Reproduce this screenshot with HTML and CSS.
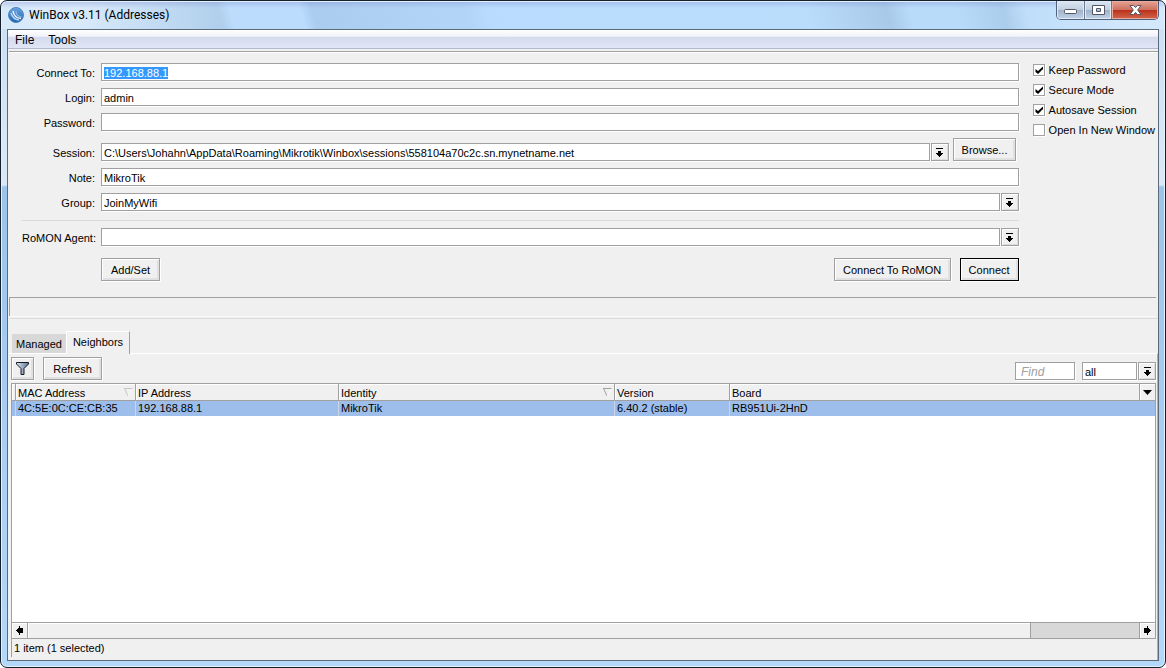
FILE: index.html
```html
<!DOCTYPE html>
<html lang="en">
<head>
<meta charset="utf-8">
<title>WinBox v3.11 (Addresses)</title>
<link rel="stylesheet" href="styles.css">
</head>
<body>
<svg class="defs" aria-hidden="true">
  <symbol id="drop" viewBox="0 0 9 9"><path d="M1 0h7v1H1zM3 3h3v2h2v1H7v1H6v1H5v1H4V8H3V7H2V6H1V5h2z"/></symbol>
  <symbol id="sort" viewBox="0 0 9 9"><path d="M0 .5h8.500M.5 .5l3.500 7.500" fill="none" stroke="#a0a0a0"/><path d="M8 1L4.500 8" fill="none" stroke="#fff"/></symbol>
</svg>
<div class="window">
  <header class="titlebar">
    <svg class="logo" width="16" height="16" viewBox="0 0 16 16">
      <defs><linearGradient id="lg" x2="0" y2="1"><stop stop-color="#6ba6de"/><stop offset="1" stop-color="#1f60ae"/></linearGradient></defs>
      <circle cx="8" cy="8" r="7.500" fill="url(#lg)" stroke="#4a86c4"/>
      <path d="M3 6c1 3.500 3.500 6.500 8 7" fill="none" stroke="#b8d6f2" stroke-width="1.500"/>
      <path d="M5 4c.5 4 3 7 8 7.500" fill="none" stroke="#eef6fe" stroke-width="1.500"/>
      <path d="M8 4c0 3 2 5.500 5.500 5.800" fill="none" stroke="#8dbbe8" stroke-width="1.200"/>
    </svg>
    <h1 class="title">WinBox v3.11 (Addresses)</h1>
    <div class="controls">
      <button class="ctl ctl-min" aria-label="Minimize"><svg width="13" height="12" viewBox="0 0 13 12"><rect x=".5" y="5.500" width="12" height="4" rx="1" fill="#fff" stroke="#535666"/></svg></button>
      <button class="ctl ctl-max" aria-label="Maximize"><svg width="13" height="12" viewBox="0 0 13 12"><path d="M.5 1.500h12v9H.5zM4.500 4.500h4v3h-4z" fill="#fff" fill-rule="evenodd" stroke="#535666"/></svg></button>
      <button class="ctl ctl-close" aria-label="Close"><svg width="13" height="12" viewBox="0 0 13 12"><path d="M1 1.500h3.500l2 2 2-2H12L8.700 6l3.300 4.500H8.500l-2-2-2 2H1L4.300 6z" fill="#fff" stroke="#535666"/></svg></button>
    </div>
  </header>
  <main class="client">
    <nav class="menu"><button>File</button><button>Tools</button></nav>
    <form class="login">
      <div class="fields">
        <div class="row"><label for="host">Connect To:</label><input id="host" type="text" value="192.168.88.1"></div>
        <div class="row"><label for="user">Login:</label><input id="user" type="text" value="admin"></div>
        <div class="row"><label for="pass">Password:</label><input id="pass" type="password"></div>
        <div class="row session"><label for="session">Session:</label><input id="session" type="text" value="C:\Users\Johahn\AppData\Roaming\Mikrotik\Winbox\sessions\558104a70c2c.sn.mynetname.net"><button type="button" class="drop" aria-label="Choose session"><svg><use href="#drop"/></svg></button><button type="button" class="btn browse">Browse...</button></div>
        <div class="row"><label for="note">Note:</label><input id="note" type="text" value="MikroTik"></div>
        <div class="row"><label for="group">Group:</label><input id="group" type="text" value="JoinMyWifi"><button type="button" class="drop" aria-label="Choose group"><svg><use href="#drop"/></svg></button></div>
        <hr>
        <div class="row"><label for="agent">RoMON Agent:</label><input id="agent" type="text"><button type="button" class="drop" aria-label="Choose agent"><svg><use href="#drop"/></svg></button></div>
        <div class="actions"><button type="button" class="btn">Add/Set</button><button type="button" class="btn romon">Connect To RoMON</button><button type="button" class="btn primary">Connect</button></div>
      </div>
      <div class="options">
        <label><input type="checkbox" checked>Keep Password</label>
        <label><input type="checkbox" checked>Secure Mode</label>
        <label><input type="checkbox" checked>Autosave Session</label>
        <label><input type="checkbox">Open In New Window</label>
      </div>
    </form>
    <div class="message"></div>
    <section class="lists">
      <div class="tabs" role="tablist"><button class="tab" role="tab">Managed</button><button class="tab active" role="tab" aria-selected="true">Neighbors</button></div>
      <div class="page">
        <div class="toolbar">
          <button class="btn filter" aria-label="Filter"><svg width="13" height="13" viewBox="0 0 13 13"><defs><linearGradient id="fg"><stop stop-color="#dfe8f5"/><stop offset="1" stop-color="#5d7294"/></linearGradient></defs><path d="M.5 .5h12v1.500L8 6.500v6H5v-6L.5 2z" fill="url(#fg)" stroke="#151a25"/></svg></button>
          <button class="btn refresh">Refresh</button>
          <input class="find" type="text" placeholder="Find" aria-label="Find">
          <div class="scope"><input type="text" value="all" aria-label="Column"><button class="drop" aria-label="Choose column"><svg><use href="#drop"/></svg></button></div>
        </div>
        <div class="grid">
          <table>
            <colgroup><col class="c-flag"><col class="c-mac"><col class="c-ip"><col class="c-id"><col class="c-ver"><col><col class="c-menu"></colgroup>
            <thead><tr><th></th><th><span class="head">MAC Address<svg class="sort faint"><use href="#sort"/></svg></span></th><th>IP Address</th><th><span class="head">Identity<svg class="sort"><use href="#sort"/></svg></span></th><th>Version</th><th>Board</th><th><button class="colmenu" aria-label="Columns"><svg width="9" height="5" viewBox="0 0 9 5"><path d="M0 0h9L4.500 5z"/></svg></button></th></tr></thead>
            <tbody><tr><td></td><td>4C:5E:0C:CE:CB:35</td><td>192.168.88.1</td><td>MikroTik</td><td>6.40.2 (stable)</td><td>RB951Ui-2HnD</td><td></td></tr></tbody>
          </table>
        </div>
        <div class="scroll">
          <button aria-label="Scroll left"><svg width="7" height="9" viewBox="0 0 7 9"><path d="M0 4h1V3h1V2h1V0h1v2h3v5H4v2H3V7H2V6H1V5H0z"/></svg></button>
          <div class="track"><div class="thumb"></div></div>
          <button aria-label="Scroll right"><svg width="7" height="9" viewBox="0 0 7 9"><path d="M7 4H6V3H5V2H4V0H3v2H0v5h3v2h1V7h1V6h1V5h1z"/></svg></button>
        </div>
        <footer class="status">1 item (1 selected)</footer>
      </div>
    </section>
  </main>
</div>
<script src="script.js"></script>
</body>
</html>
```
FILE: styles.css
```css
* { box-sizing: border-box; }
html, body { height: 100%; }
body { margin: 0; background: #fff; font: 11px/14px "Liberation Sans", Arial, sans-serif; color: #000; }
button, input { font: inherit; color: inherit; margin: 0; border-radius: 0; }
button { padding: 0; border: 0; background: none; }
.defs { position: absolute; width: 0; height: 0; }

.window {
  display: flex; flex-direction: column; height: 100vh;
  padding: 0 6px 6px; border: 1px solid #14202e; border-radius: 7px;
  box-shadow: inset 0 0 0 1px #e3f1fd;
  background:
    linear-gradient(rgba(120, 130, 205, .35), transparent 7px) 0 0 / 100% 28px no-repeat,
    linear-gradient(90deg, #d8e9fa 80px, transparent 240px) 0 0 / 100% 28px no-repeat,
    linear-gradient(270deg, #d4e8fb 20px, transparent 160px) 0 0 / 100% 28px no-repeat,
    linear-gradient(75deg, #abcceb 19%, #bbdcfc 20%, #bbdcfc 26%, #aaccee 27%, #b2d4f6 38%, #b2d4f6 40%, #b9dbfd 42%, #bbddfc 69%, #a8cae8 76%, #b9dbfa 78%, #b9dbfa 82%, #abcdec 86%, #bbdcfa 88%) 0 0 / 100% 28px no-repeat,
    linear-gradient(#c9dff4 0, #dbe9f6 184px, #9cc3ea 186px, #b4d8f9 100%);
}
.titlebar { display: flex; height: 28px; padding-left: 1px; }
.logo { margin-top: 6px; }
.title { margin: 6px 0 0 5px; flex: 1; font: 12px/16px Roboto, "Open Sans", sans-serif; }
.controls { display: flex; height: 19px; border: 1px solid #50607a; border-top: 0; border-radius: 0 0 5px 5px; overflow: hidden; }
.ctl { display: flex; align-items: center; justify-content: center; width: 28px; background: linear-gradient(#dce6f2, #c3d0e0 48%, #9fb1c8 50%, #c0d3e8); box-shadow: inset 0 0 0 1px #e2ebf5; border-right: 1px solid #6c7b92; }
.ctl-max { width: 27px; }
.ctl-close { width: 46px; border: 0; background: linear-gradient(#e5a396, #d0715f 48%, #b8301a 50%, #d3664c); box-shadow: inset 0 0 0 1px #e9a99c; }

.client { flex: 1; min-height: 0; display: flex; flex-direction: column; border: 1px solid #5c6b7c; background: #f0f0f0; }
.menu { height: 19px; flex: none; display: flex; gap: 14px; padding-left: 7px; background: linear-gradient(#fff, #f0f2f9 35%, #d5daed 40%, #e1e6f6); border-bottom: 1px solid #b4bacd; }
.menu button { font-size: 12px; padding-top: 1px; }
.login { display: flex; gap: 14px; margin: 2px 0 0 1px; padding: 11px 3px 0 13px; border-top: 1px solid #a0a0a0; box-shadow: inset 0 1px #fff; }
.fields { flex: 1; min-width: 0; }
.row { display: flex; gap: 1px; margin-bottom: 7px; }
.row label { width: 73px; margin-right: 5px; padding-top: 3px; text-align: right; white-space: nowrap; }
input[type="text"], input[type="password"] { flex: 1; min-width: 0; height: 18px; padding: 2px 2px 0; border: 1px solid #a0a0a0; background: #fff; box-shadow: 1px 1px #fff; outline: 0; }
#host::selection { background: #39f; color: #fff; }
.drop { display: flex; align-items: center; justify-content: center; width: 18px; height: 18px; border: 1px solid #a0a0a0; box-shadow: 1px 1px #fff, inset 1px 1px #fff, inset -1px -1px #dcdcdc; }
.drop svg { width: 9px; height: 9px; }
.btn { height: 23px; padding: 0 8px; border: 1px solid #a0a0a0; background: #f0f0f0; box-shadow: 1px 1px #fff, inset 1px 1px #fff, inset -2px -2px #e0e0e0; white-space: nowrap; }
.session { height: 18px; margin-top: 12px; }
.browse { width: 63px; margin: -5px 3px 0 3px; }
hr { height: 1px; margin: 9px 0 7px; border: 0; background: #dadada; }
.actions { display: flex; margin: 12px 0 0 79px; }
.romon { width: 117px; margin: 0 9px 0 auto; }
.actions .btn:first-child, .primary { width: 59px; }
.actions .primary { border-color: #000; }
.options { display: flex; flex-direction: column; gap: 6px; min-width: 122px; }
.options label { display: flex; align-items: center; gap: 4px; height: 14px; white-space: nowrap; }
.options input { appearance: none; width: 12px; height: 12px; border: 1px solid #a0a0a0; background: #fff; box-shadow: 1px 1px #fff; }
.options input:checked { background: #fff url("data:image/svg+xml,%3Csvg xmlns='http://www.w3.org/2000/svg' viewBox='0 0 10 10'%3E%3Cpath d='M1.500 4v3L4 9l5-5V1.500L4 6z'/%3E%3C/svg%3E") center / 10px 10px no-repeat; }
.message { height: 19px; flex: none; margin: 16px 2px 1px 1px; border: solid #a0a0a0; border-width: 1px 0 0 1px; box-shadow: 0 1px #f8f8f8; }

.lists { flex: 1; min-height: 0; display: flex; flex-direction: column; margin: 1px 0 0 1px; padding-top: 12px; border-top: 1px solid #dcdcdc; }
.tabs { display: flex; align-items: flex-end; height: 22px; padding-left: 3px; }
.tab { height: 19px; width: 54px; background: #d8d8d8; }
.tab.active { width: 64px; height: 23px; margin-bottom: -1px; padding-bottom: 2px; background: #f0f0f0; border: solid #fff; border-width: 1px 1px 0; border-right-color: #a0a0a0; z-index: 1; }
.page { flex: 1; min-height: 0; display: flex; flex-direction: column; padding: 3px 1px 3px 2px; border-top: 1px solid #fff; border-right: 1px solid #b0b0b0; }
.toolbar { display: flex; height: 23px; margin-bottom: 3px; }
.filter { width: 23px; padding: 3px 0 0; }
.refresh { width: 59px; margin-left: 9px; }
.toolbar .find { flex: none; width: 60px; margin: 5px 7px 0 auto; padding-left: 5px; font-size: 12px; }
.find::placeholder { color: #a0a0a0; font-style: italic; }
.scope { display: flex; gap: 1px; width: 74px; margin-top: 5px; }
.grid { flex: 1; min-height: 0; overflow: hidden; background: #fff; border: 1px solid #a0a0a0; border-bottom: 0; }
table { width: 100%; table-layout: fixed; border-collapse: separate; border-spacing: 0; }
.c-flag { width: 3px; } .c-mac { width: 120px; } .c-ip { width: 203px; } .c-id { width: 276px; } .c-ver { width: 115px; } .c-menu { width: 16px; }
th { height: 17px; padding: 1px 2px 0; font-weight: normal; text-align: left; background: #f0f0f0; border: solid #a0a0a0; border-width: 0 0 1px 1px; box-shadow: inset 1px 1px #fff; }
td { height: 15px; padding: 0 2px 1px; background: #9dbeea; border-left: 1px solid #c9d6e8; white-space: nowrap; }
th:first-child, td:first-child { padding: 0; border-left: 0; }
td:last-child { border: 0; }
.head { display: flex; justify-content: space-between; }
.sort { width: 9px; height: 9px; margin-top: 2px; }
.faint { opacity: .5; }
.colmenu { display: flex; align-items: center; justify-content: center; width: 100%; height: 12px; }
.scroll { display: flex; height: 17px; border: 1px solid #a0a0a0; }
.scroll button { width: 15px; display: flex; align-items: center; justify-content: center; box-shadow: inset 1px 1px #fff; }
.track { flex: 1; display: flex; background: #d8d8d8; border: solid #a0a0a0; border-width: 0 1px; }
.thumb { width: 90.3%; background: #f0f0f0; border-right: 1px solid #a0a0a0; box-shadow: inset 1px 1px #fff; }
.status { height: 18px; padding: 2px 2px 0; border-left: 1px solid #a0a0a0; }
```
FILE: script.js
```js
const host = document.getElementById("host");
host.focus();
host.select();
```
